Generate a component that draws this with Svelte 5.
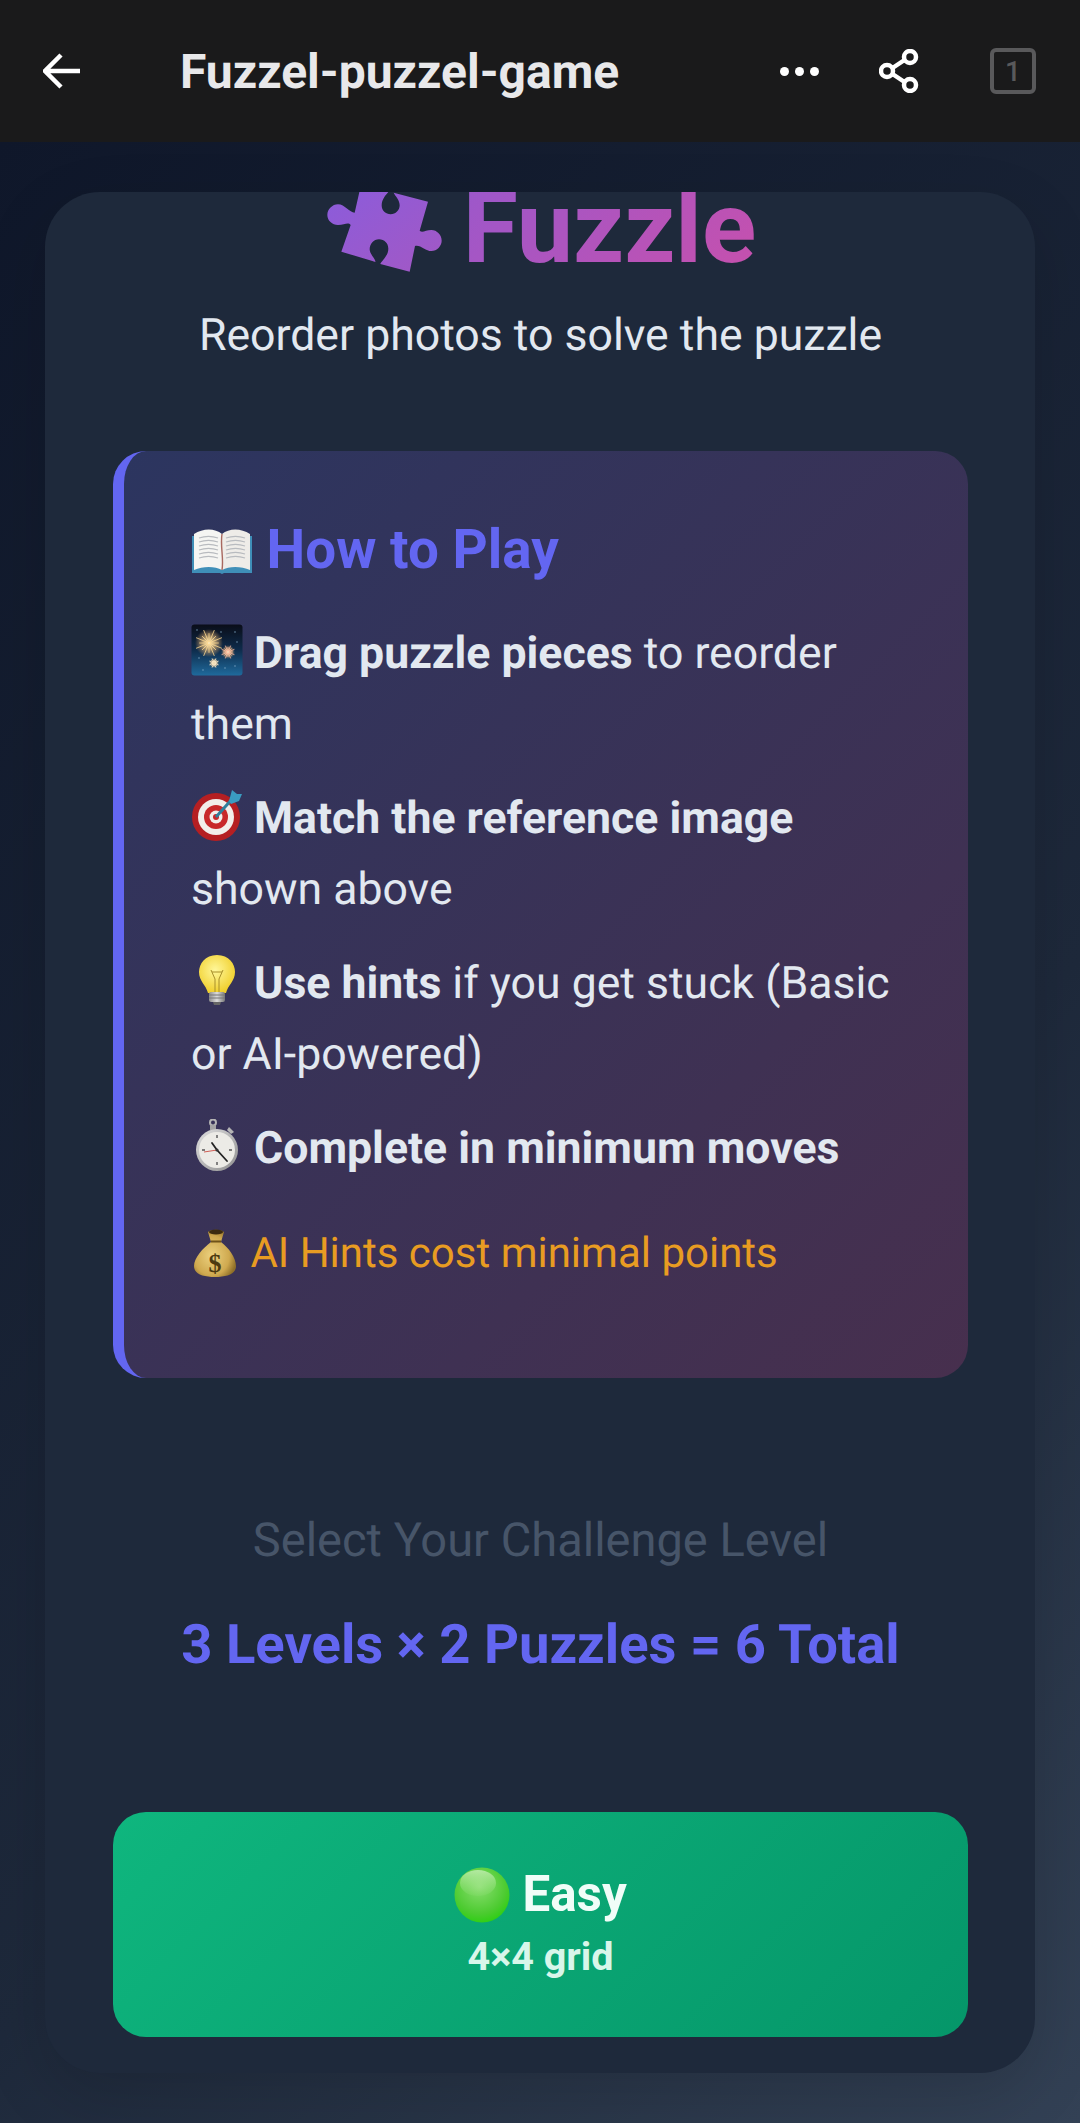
<script>
  const bigSpark = Array.from({ length: 16 }, (_, i) => (i * Math.PI) / 8);
  const ray = (a, r1, r2, cx, cy) => ({
    x1: cx + Math.cos(a) * r1,
    y1: cy + Math.sin(a) * r1,
    x2: cx + Math.cos(a) * r2,
    y2: cy + Math.sin(a) * r2
  });
  const sparks = [
    { cx: 18, cy: 19, r: 14, c: '#ffd98f' },
    { cx: 37, cy: 28, r: 7, c: '#ffb9a0' },
    { cx: 23, cy: 39, r: 5, c: '#ffeccc' }
  ];
  const stars = [[6, 6], [44, 8], [8, 34], [44, 42], [34, 44], [12, 46], [30, 8], [46, 18]];
</script>

<div class="screen">
  <header class="topbar">
    <svg class="back" viewBox="0 0 38 36" aria-hidden="true">
      <path d="M37 18H2M18 2 2 18l16 16" />
    </svg>
    <div class="page-title">Fuzzel-puzzel-game</div>
    <div class="dots" aria-hidden="true"><i></i><i></i><i></i></div>
    <svg class="share" viewBox="0 0 40 44" aria-hidden="true">
      <circle cx="31" cy="8" r="6" />
      <circle cx="8" cy="22" r="6" />
      <circle cx="31" cy="36" r="6" />
      <path d="M13.5 19 25.5 11M13.5 25l12 8" />
    </svg>
    <div class="tabs">1</div>
  </header>

  <main class="page">
    <section class="card">
      <h1 class="logo">
        <svg class="piece" viewBox="0 0 480 360" aria-hidden="true">
          <defs>
            <linearGradient id="pz" x1="0" y1="0" x2="1" y2="1">
              <stop offset="0" stop-color="#8a5cdc" />
              <stop offset="1" stop-color="#a358c4" />
            </linearGradient>
          </defs>
          <path fill="url(#pz)" d="M175 40 258 63C252 72 236 85 236 106C236 122 248 133 263 133C278 133 290 120 290 106C290 90 278 80 272 68L375 95 350 182C358 190 368 180 385 180C402 180 416 195 416 212C416 228 402 243 385 243C368 243 350 222 336 228L320 305 232 282C236 272 256 258 256 236C256 220 244 208 228 208C212 208 200 222 200 238C200 252 214 262 218 276L115 245 143 165C135 155 125 165 105 165C88 165 73 152 73 135C73 118 88 103 105 103C125 103 140 128 155 128L175 40Z" />
        </svg>
        <span class="logo-text">Fuzzle</span>
      </h1>
      <p class="tagline">Reorder photos to solve the puzzle</p>

      <div class="howto">
        <h3>
          <svg class="emoji book" viewBox="0 0 62 46" aria-hidden="true">
            <path d="M1 8h60v37H33l-2 1-2-1H1z" fill="#3f8fb8" />
            <path d="M3 6C12 0 24 0 31 6v36C24 38 12 38 3 42z" fill="#f5f5f2" />
            <path d="M59 6C50 0 38 0 31 6v36C38 38 50 38 59 42z" fill="#eeece8" />
            <path d="M31 6c-2 12 2 24 0 36" stroke="#a8685f" stroke-width="1.4" fill="none" />
            <path d="M8 10c6-2 13-2 19 0M8 14c6-2 13-2 19 0M8 18c6-2 13-2 19 0M8 22c6-2 13-2 19 0M8 26c6-2 13-2 19 0M8 30c6-2 13-2 19 0M35 10c6-2 13-2 19 0M35 14c6-2 13-2 19 0M35 18c6-2 13-2 19 0M35 22c6-2 13-2 19 0M35 26c6-2 13-2 19 0M35 30c6-2 13-2 19 0" stroke="#b8bbbf" stroke-width="1.3" fill="none" />
          </svg> How to Play
        </h3>
        <p>
          <svg class="emoji" viewBox="0 0 52 52" aria-hidden="true">
            <defs>
              <linearGradient id="sky" x1="0" y1="0" x2="0" y2="1">
                <stop offset="0" stop-color="#0a0d18" />
                <stop offset="0.5" stop-color="#0e2c4c" />
                <stop offset="1" stop-color="#1f6a9c" />
              </linearGradient>
              <radialGradient id="glow">
                <stop offset="0" stop-color="#fff2cf" />
                <stop offset="0.4" stop-color="#ffd690" stop-opacity="0.7" />
                <stop offset="1" stop-color="#ffb060" stop-opacity="0" />
              </radialGradient>
            </defs>
            <rect x="0.5" y="0.5" width="51" height="51" rx="3" fill="url(#sky)" />
            {#each stars as st}
              <circle cx={st[0]} cy={st[1]} r="0.7" fill="#7fa8c8" />
            {/each}
            {#each sparks as s}
              <circle cx={s.cx} cy={s.cy} r={s.r} fill="url(#glow)" />
              {#each bigSpark as a, i}
                {@const l = ray(a, 1, i % 2 ? s.r : s.r * 0.7, s.cx, s.cy)}
                <line x1={l.x1} y1={l.y1} x2={l.x2} y2={l.y2} stroke={s.c} stroke-width="0.8" />
              {/each}
            {/each}
          </svg> <strong>Drag puzzle pieces</strong> to reorder them
        </p>
        <p>
          <svg class="emoji" viewBox="0 0 52 52" aria-hidden="true">
            <circle cx="25" cy="28" r="24" fill="#b51f22" />
            <circle cx="25" cy="28" r="18" fill="#f2eeea" />
            <circle cx="25" cy="28" r="12" fill="#c8282a" />
            <circle cx="25" cy="28" r="6.5" fill="#f2eeea" />
            <circle cx="25" cy="28" r="3" fill="#c8282a" />
            <path d="M25 28 42 9" stroke="#2f7f9c" stroke-width="3" />
            <path d="M38 12 41 1l5 4 5 0-3 7-8 3z" fill="#3a9cc0" />
          </svg> <strong>Match the reference image</strong> shown above
        </p>
        <p>
          <svg class="emoji" viewBox="0 0 52 52" aria-hidden="true">
            <defs>
              <radialGradient id="bulb" cx="0.45" cy="0.4" r="0.6">
                <stop offset="0" stop-color="#fff79a" />
                <stop offset="1" stop-color="#f0cf2c" />
              </radialGradient>
              <linearGradient id="cap" x1="0" y1="0" x2="1" y2="0">
                <stop offset="0" stop-color="#8d8d8d" />
                <stop offset="0.5" stop-color="#dcdcdc" />
                <stop offset="1" stop-color="#777" />
              </linearGradient>
            </defs>
            <path d="M26 1C14 1 8 10 8 18c0 9 7 13 9 21h18c2-8 9-12 9-21C44 10 38 1 26 1Z" fill="url(#bulb)" />
            <path d="M20 16l4 9v13M32 16l-4 9v13M21 18h10" stroke="#a88f2a" stroke-width="1" fill="none" />
            <rect x="18" y="38" width="16" height="10" rx="2" fill="url(#cap)" />
            <path d="M18 41h16M18 44h16" stroke="#777" />
            <path d="M22 48h8l-1 3h-6z" fill="#666" />
          </svg> <strong>Use hints</strong> if you get stuck (Basic or AI-powered)
        </p>
        <p>
          <svg class="emoji" viewBox="0 0 52 52" aria-hidden="true">
            <defs>
              <linearGradient id="steel" x1="0" y1="0" x2="1" y2="1">
                <stop offset="0" stop-color="#e0e0e0" />
                <stop offset="1" stop-color="#8f8f8f" />
              </linearGradient>
            </defs>
            <circle cx="22" cy="3.5" r="3" fill="none" stroke="#b5b5b5" stroke-width="2" />
            <rect x="19" y="6" width="6" height="5" fill="#a5a5a5" />
            <path d="M38 8l5 5-3 2-4-4z" fill="#b5b5b5" />
            <circle cx="26" cy="31" r="21" fill="url(#steel)" />
            <circle cx="26" cy="31" r="18" fill="#ecebe6" />
            <path d="M26 31 21 24M26 31 36 42" stroke="#222" stroke-width="1.8" stroke-linecap="round" />
            <path d="M26 31 13 33" stroke="#c63a30" stroke-width="0.8" />
            <circle cx="26" cy="31" r="1.6" fill="#333" />
            <path d="M26 16v3M26 43v3M11 31h3M38 31h3" stroke="#555" stroke-width="1.4" />
          </svg> <strong>Complete in minimum moves</strong>
        </p>
        <p class="cost">
          <svg class="emoji bag" viewBox="0 0 52 49" aria-hidden="true">
            <defs>
              <radialGradient id="sack" cx="0.42" cy="0.55" r="0.6">
                <stop offset="0" stop-color="#ecd17f" />
                <stop offset="0.7" stop-color="#cfa94f" />
                <stop offset="1" stop-color="#8f6f28" />
              </radialGradient>
            </defs>
            <path d="M17 4C20 1 30 1 33 4L30 14C38 20 45 30 45 38C45 46 36 49 24 49C12 49 3 46 3 38C3 30 12 20 20 14Z" fill="url(#sack)" />
            <ellipse cx="25" cy="4" rx="7" ry="2.4" fill="#3b2b10" />
            <path d="M20 13.5h10" stroke="#6f5319" stroke-width="2" />
            <text x="24" y="44" text-anchor="middle" class="dollar">$</text>
          </svg> AI Hints cost minimal points
        </p>
      </div>

      <div class="levels-head">
        <p class="select">Select Your Challenge Level</p>
        <p class="total">3 Levels × 2 Puzzles = 6 Total</p>
      </div>

      <button class="level">
        <span class="level-name">
          <svg class="ball" viewBox="0 0 56 56" aria-hidden="true">
            <defs>
              <radialGradient id="ballg" cx="0.45" cy="0.35" r="0.7">
                <stop offset="0" stop-color="#8ade70" />
                <stop offset="0.7" stop-color="#4ccb30" />
                <stop offset="1" stop-color="#28cf0e" />
              </radialGradient>
              <linearGradient id="ballh" x1="0" y1="0" x2="0" y2="1">
                <stop offset="0" stop-color="#d6f3c8" stop-opacity="0.7" />
                <stop offset="1" stop-color="#a8e890" stop-opacity="0.1" />
              </linearGradient>
            </defs>
            <circle cx="28" cy="28" r="27.5" fill="url(#ballg)" />
            <ellipse cx="24" cy="16" rx="18" ry="13" fill="url(#ballh)" />
          </svg> Easy
        </span>
        <span class="level-grid">4×4 grid</span>
      </button>
    </section>
  </main>
</div>

<style>
  :global(body) {
    margin: 0;
    background: #0f172a;
  }
  .screen {
    width: 1080px;
    height: 2123px;
    overflow: hidden;
    display: flex;
    flex-direction: column;
    font-family: Roboto, "Liberation Sans", sans-serif;
    text-rendering: geometricPrecision;
  }
  .topbar {
    flex: none;
    height: 142px;
    background: #1a1a1b;
    display: flex;
    align-items: center;
    color: #e8e8ea;
  }
  .back {
    width: 38px;
    height: 36px;
    margin-left: 43px;
    fill: none;
    stroke: #fff;
    stroke-width: 4.5;
  }
  .page-title {
    margin-left: 99px;
    font-size: 48px;
    font-weight: 700;
    flex: 1;
  }
  .dots {
    display: flex;
    gap: 6px;
    margin-right: 60px;
  }
  .dots i {
    width: 9px;
    height: 9px;
    border-radius: 50%;
    background: #fff;
  }
  .share {
    width: 40px;
    height: 44px;
    fill: none;
    stroke: #fff;
    stroke-width: 4.5;
    margin-right: 71px;
  }
  .tabs {
    box-sizing: border-box;
    width: 46px;
    height: 46px;
    margin-right: 44px;
    border: 4px solid #59595b;
    border-radius: 6px;
    color: #59595b;
    font-size: 28px;
    font-weight: 500;
    display: flex;
    align-items: center;
    justify-content: center;
  }
  .page {
    flex: 1;
    padding: 50px 45px;
    box-sizing: border-box;
    min-height: 0;
    background: linear-gradient(135deg, #0f172a 0%, #1e293b 62%, #334155 100%);
  }
  .card {
    box-sizing: border-box;
    height: 1881px;
    background: #1e293b;
    border-radius: 55px;
    padding: 0 67px 0 68px;
    overflow: hidden;
    box-shadow: 0 22px 66px rgba(0, 0, 0, 0.14);
  }
  .logo {
    margin: -20px 0 0;
    height: 112px;
    padding-right: 22px;
    display: flex;
    justify-content: center;
    align-items: center;
    font-size: 100.5px;
    font-weight: 700;
    line-height: 112px;
  }
  .piece {
    width: 160px;
    height: 120px;
    flex: none;
    align-self: flex-start;
    margin-top: -2px;
  }
  .logo-text {
    background: linear-gradient(135deg, #9a58cc, #c850ac);
    -webkit-background-clip: text;
    background-clip: text;
    color: transparent;
  }
  .tagline {
    margin: 16px 0 0;
    text-align: center;
    color: #e2e8f0;
    font-size: 44.6px;
    line-height: 70px;
  }
  .howto {
    box-sizing: border-box;
    height: 927px;
    margin-top: 81px;
    padding: 60px 66px 0 67px;
    border-left: 11px solid #6366f1;
    border-radius: 33px;
    background: linear-gradient(135deg, rgba(99, 102, 241, 0.2), rgba(236, 72, 153, 0.2));
  }
  h3 {
    margin: 0 0 29px;
    color: #6366f1;
    font-size: 54.8px;
    line-height: 78px;
    font-weight: 700;
  }
  .howto p {
    margin: 0 0 23px;
    font-size: 44.6px;
    line-height: 71px;
    color: #e2e8f0;
  }
  strong {
    font-weight: 700;
  }
  .emoji {
    width: 52px;
    height: 52px;
    vertical-align: -8px;
  }
  .book {
    width: 62px;
    height: 46px;
    vertical-align: -6px;
  }
  .howto .cost {
    margin-top: 33.5px;
    color: #e89c22;
    font-size: 42px;
  }
  .bag {
    width: 52px;
    height: 49px;
    margin-right: -3px;
    vertical-align: -10px;
  }
  .dollar {
    font-family: "Liberation Serif", serif;
    font-size: 26px;
    font-weight: 700;
    fill: #4d3a10;
  }
  .levels-head {
    margin-top: 128px;
    text-align: center;
  }
  .select {
    margin: 0;
    color: #475569;
    font-size: 47px;
    line-height: 70px;
  }
  .total {
    margin: 35px 0 0;
    color: #6366f1;
    font-size: 54.4px;
    font-weight: 700;
    line-height: 70px;
  }
  .level {
    margin-top: 131px;
    width: 100%;
    height: 225px;
    border: 0;
    border-radius: 33px;
    background: linear-gradient(135deg, #0fb67e, #059669);
    color: #f0fdf8;
    font-family: inherit;
    display: flex;
    flex-direction: column;
    align-items: center;
    justify-content: center;
    gap: 8px;
    padding: 0 0 4px;
  }
  .level-name {
    font-size: 49.3px;
    font-weight: 700;
    line-height: 60px;
  }
  .ball {
    width: 56px;
    height: 56px;
    vertical-align: -12px;
  }
  .level-grid {
    font-size: 39.6px;
    font-weight: 700;
    line-height: 50px;
    color: #d8f6ea;
  }
</style>
